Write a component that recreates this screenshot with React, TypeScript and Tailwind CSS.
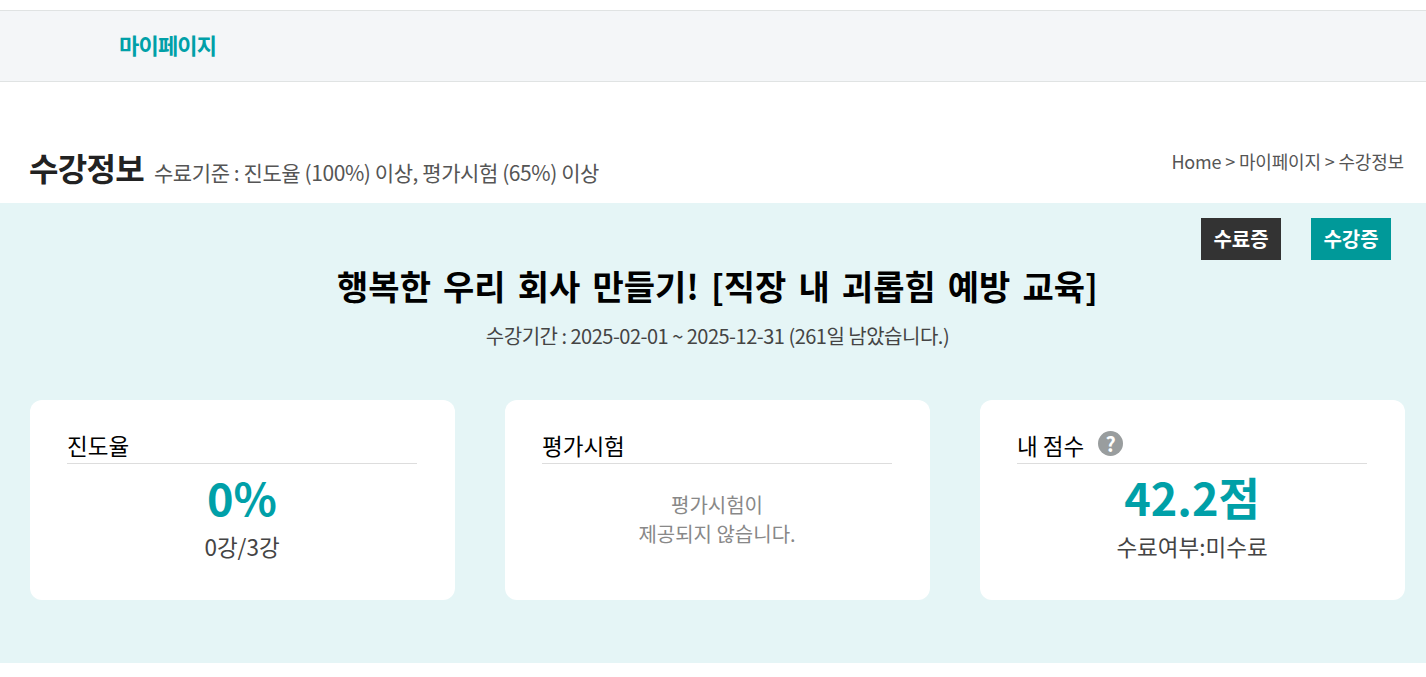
import React from "react";

const font = { fontFamily: '"Noto Sans CJK KR", "Noto Sans", sans-serif' };

function Card({ title, children, help }: { title: string; children: React.ReactNode; help?: boolean }) {
  return (
    <div className="w-[425px] h-[200px] bg-white rounded-[12px] pl-[37px] pr-[38px] pt-[30px]">
      <div className="h-[34px] border-b border-[#dddddd] flex items-start gap-[14px] text-[22.5px] leading-[30px] text-black">
        <span>{title}</span>
        {help && (
          <span className="w-[25px] h-[25px] mt-[1px] rounded-full bg-[#999d9e] text-white text-[20px] leading-[25px] font-bold flex items-center justify-center">?</span>
        )}
      </div>
      {children}
    </div>
  );
}

export default function App() {
  return (
    <div style={font} className="w-[1426px] h-[677px] bg-white overflow-hidden">
      <div className="mt-[10px] h-[72px] bg-[#f4f6f8] border-y border-[#e0e3e3] pl-[119px] flex items-center pb-[4px]">
        <span className="text-[22px] font-bold text-[#00a0a8] tracking-[-0.8px]">마이페이지</span>
      </div>
      <div className="h-[121px] pr-[22px] pl-[29px] flex justify-between items-end pb-[14px]">
        <div className="flex items-baseline gap-[10px]">
          <span className="text-[32px] font-bold leading-[44px] text-[#222] tracking-[-0.7px]">수강정보</span>
          <span className="text-[21px] text-[#555] tracking-[-0.42px]">수료기준 : 진도율 (100%) 이상, 평가시험 (65%) 이상</span>
        </div>
        <span className="text-[18px] text-[#555] mb-[14px] tracking-[-0.17px]">Home &gt; 마이페이지 &gt; 수강정보</span>
      </div>
      <div className="h-[460px] bg-[#e5f5f6] pl-[30px] pr-[21px] pt-[15px]">
        <div className="flex justify-end gap-[30px] pr-[14px]">
          <span className="w-[80px] h-[42px] bg-[#333333] text-white font-bold text-[20px] flex items-center justify-center">수료증</span>
          <span className="w-[80px] h-[42px] bg-[#009999] text-white font-bold text-[20px] flex items-center justify-center">수강증</span>
        </div>
        <div className="text-center text-[34px] font-bold text-black leading-[50px] mt-[1px] [word-spacing:4.4px]">행복한 우리 회사 만들기! [직장 내 괴롭힘 예방 교육]</div>
        <div className="text-center text-[20px] text-[#444] leading-[30px] mt-[10px] tracking-[-0.5px]">수강기간 : 2025-02-01 ~ 2025-12-31 (261일 남았습니다.)</div>
        <div className="flex justify-between mt-[49px]">
          <Card title="진도율">
            <div className="text-center text-[45px] font-bold text-[#00a0a8] leading-[70px] -mt-[2px]">0%</div>
            <div className="text-center text-[22.5px] text-[#444] leading-[30px] -mt-[1px]">0강/3강</div>
          </Card>
          <Card title="평가시험">
            <div className="text-center text-[20px] text-[#888] leading-[29px] mt-[26px]">평가시험이<br />제공되지 않습니다.</div>
          </Card>
          <Card title="내 점수" help>
            <div className="text-center text-[45px] font-bold text-[#00a0a8] leading-[70px] -mt-[2px]">42.2점</div>
            <div className="text-center text-[22.5px] text-[#444] leading-[30px] -mt-[1px]">수료여부:미수료</div>
          </Card>
        </div>
      </div>
    </div>
  );
}
